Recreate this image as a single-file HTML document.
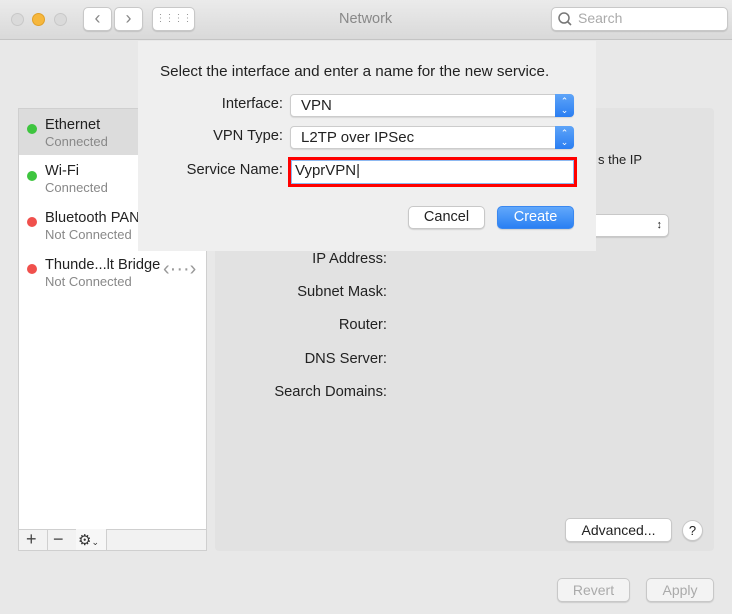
<!DOCTYPE html><html><head><style>
*{box-sizing:border-box;margin:0;padding:0}
body{width:732px;height:614px;overflow:hidden;background:#e8e8e8;font-family:"Liberation Sans",sans-serif;font-size:14.5px;color:#222;position:relative}
.a{position:absolute}
.btn{position:absolute;background:#fff;border:1px solid #c8c8c8;border-radius:5px;box-shadow:0 1px 1px rgba(0,0,0,.12);text-align:center;font-size:14px}
.pop{position:absolute;background:#fff;border:1px solid #ccc;border-radius:4px;box-shadow:0 1px 1px rgba(0,0,0,.1);padding-left:10px;font-size:15px;line-height:22px}
.pop .ar{position:absolute;right:-1px;top:-1px;bottom:-1px;width:19px;background:linear-gradient(#5ea4f8,#2a7ef2);border-radius:0 4px 4px 0;color:#fff;font-size:9px;line-height:9px;text-align:center;padding-top:3px}
.lbl{position:absolute;text-align:right;font-size:14.7px}
.dot{position:absolute;width:10px;height:10px;border-radius:50%}
.nm{position:absolute;font-size:14.6px}
.st{position:absolute;font-size:13px;color:#888}
</style></head><body>
<div class="a" style="left:0;top:0;width:732px;height:40px;background:linear-gradient(#ebebeb,#d9d9d9);border-bottom:1px solid #c4c4c4"></div>
<div class="dot" style="left:11px;top:13px;width:13px;height:13px;background:#dadada;border:1px solid #c8c8c8"></div>
<div class="dot" style="left:32px;top:13px;width:13px;height:13px;background:#f6b73c;border:1px solid #e0a02a"></div>
<div class="dot" style="left:54px;top:13px;width:13px;height:13px;background:#dadada;border:1px solid #c8c8c8"></div>
<div class="btn" style="left:83px;top:7px;width:29px;height:24px;color:#888;font-size:18px;line-height:20px">&#8249;</div>
<div class="btn" style="left:114px;top:7px;width:29px;height:24px;color:#888;font-size:18px;line-height:20px">&#8250;</div>
<div class="btn" style="left:152px;top:7px;width:43px;height:24px;color:#999;font-size:10px;line-height:22px;letter-spacing:-1px">&#8942;&#8942;&#8942;&#8942;</div>
<div class="a" style="left:339px;top:11px;font-size:14.5px;color:#888">Network</div>
<div class="btn" style="left:551px;top:7px;width:177px;height:24px;text-align:left;padding-left:26px;color:#aaa;line-height:21px;font-size:14px">Search</div>
<svg class="a" style="left:557px;top:11px" width="16" height="16"><circle cx="7" cy="7" r="5" fill="none" stroke="#777" stroke-width="1.5"/><line x1="10.5" y1="10.5" x2="14" y2="14" stroke="#777" stroke-width="1.6"/></svg>

<div class="a" style="left:18px;top:108px;width:189px;height:443px;background:#fff;border:1px solid #cfcfcf"></div>
<div class="a" style="left:19px;top:109px;width:187px;height:46px;background:#dcdcdc"></div>
<div class="dot" style="left:27px;top:124px;background:#3ec53f"></div><div class="nm" style="left:45px;top:117px">Ethernet</div><div class="st" style="left:45px;top:134px">Connected</div>
<div class="dot" style="left:27px;top:171px;background:#3ec53f"></div><div class="nm" style="left:45px;top:163px">Wi-Fi</div><div class="st" style="left:45px;top:180px">Connected</div>
<div class="dot" style="left:27px;top:217px;background:#f0504c"></div><div class="nm" style="left:45px;top:210px">Bluetooth PAN</div><div class="st" style="left:45px;top:227px">Not Connected</div>
<div class="dot" style="left:27px;top:264px;background:#f0504c"></div><div class="nm" style="left:45px;top:257px">Thunde...lt Bridge</div><div class="st" style="left:45px;top:274px">Not Connected</div>
<div class="a" style="left:163px;top:258px;color:#999;font-size:20px">&lsaquo;&middot;&middot;&middot;&rsaquo;</div>
<div class="a" style="left:19px;top:529px;width:187px;height:21px;background:#f2f2f2;border-top:1px solid #cfcfcf"></div>
<div class="a" style="left:19px;top:529px;width:58px;height:21px;border-right:1px solid #cfcfcf"></div>
<div class="a" style="left:47px;top:529px;width:1px;height:21px;background:#cfcfcf"></div>
<div class="a" style="left:76px;top:529px;width:31px;height:21px;border-right:1px solid #cfcfcf;background:#f7f7f7"></div>
<div class="a" style="left:26px;top:529px;font-size:18px;color:#444">+</div>
<div class="a" style="left:53px;top:529px;font-size:18px;color:#444">&minus;</div>
<div class="a" style="left:78px;top:531px;font-size:15px;color:#333">&#9881;<span style="font-size:9px">&#8964;</span></div>

<div class="a" style="left:215px;top:108px;width:499px;height:443px;background:#e2e2e2;border-radius:4px"></div>
<div class="lbl" style="right:345px;top:251px">IP Address:</div>
<div class="lbl" style="right:345px;top:284px">Subnet Mask:</div>
<div class="lbl" style="right:345px;top:317px">Router:</div>
<div class="lbl" style="right:345px;top:351px">DNS Server:</div>
<div class="lbl" style="right:345px;top:384px">Search Domains:</div>
<div class="a" style="left:598px;top:152px;font-size:13px">s the IP</div>
<div class="btn" style="left:580px;top:214px;width:89px;height:23px;text-align:right;padding-right:6px;font-size:11px;line-height:20px">&#8597;</div>
<div class="btn" style="left:565px;top:518px;width:107px;height:24px;line-height:22px">Advanced...</div>
<div class="btn" style="left:682px;top:520px;width:21px;height:21px;border-radius:50%;line-height:19px;font-size:13px">?</div>
<div class="btn" style="left:557px;top:578px;width:73px;height:24px;line-height:22px;color:#aaa;background:#f3f3f3">Revert</div>
<div class="btn" style="left:646px;top:578px;width:68px;height:24px;line-height:22px;color:#aaa;background:#f3f3f3">Apply</div>

<div class="a" style="left:138px;top:41px;width:458px;height:210px;background:#efefef"></div>
<div class="a" style="left:160px;top:63px;font-size:15.2px">Select the interface and enter a name for the new service.</div>
<div class="lbl" style="right:449px;top:96px">Interface:</div>
<div class="lbl" style="right:449px;top:128px">VPN Type:</div>
<div class="lbl" style="right:449px;top:162px">Service Name:</div>
<div class="pop" style="left:290px;top:94px;width:284px;height:23px">VPN<div class="ar">&#8963;<br>&#8964;</div></div>
<div class="pop" style="left:290px;top:126px;width:284px;height:23px">L2TP over IPSec<div class="ar">&#8963;<br>&#8964;</div></div>
<div class="a" style="left:288px;top:157px;width:289px;height:30px;border:3px solid #f00;background:#fff"></div>
<div class="a" style="left:291px;top:160px;width:283px;height:24px;border:1px solid #8db8f0"></div>
<div class="a" style="left:295px;top:162px;font-size:15px">VyprVPN|</div>
<div class="btn" style="left:408px;top:206px;width:77px;height:23px;line-height:21px;font-size:14.5px">Cancel</div>
<div class="btn" style="left:497px;top:206px;width:77px;height:23px;line-height:21px;font-size:14.5px;color:#fff;background:linear-gradient(#61a8fb,#2a7ff3);border-color:#3a88f0">Create</div>
</body></html>
